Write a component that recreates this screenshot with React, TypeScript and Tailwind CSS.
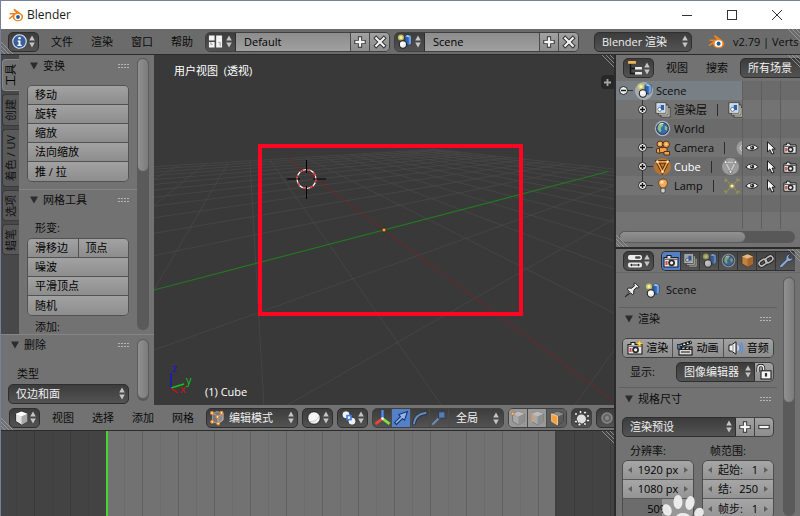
import React from "react";

type IconProps = { className?: string };
type Kids = { children: React.ReactNode; className?: string };

const DARK = "bg-linear-to-b from-[#3c3c3c] to-[#535353] text-[#f0f0f0]";
const LIGHT = "bg-linear-to-b from-[#a2a2a2] to-[#8d8d8d] text-black";

/* ---------- shared widgets ---------- */

function Svg({ children, className = "size-4" }: { children: React.ReactNode; className?: string }) {
  return (
    <svg viewBox="0 0 16 16" className={"shrink-0 " + className} aria-hidden="true">
      {children}
    </svg>
  );
}

function Arrows({ className = "" }: IconProps) {
  return (
    <svg viewBox="0 0 6 13" className={"h-[13px] w-[6px] shrink-0 " + className} aria-hidden="true">
      <path d="M3 0.5L5.8 5.5H0.2zM3 12.5L5.8 7.5H0.2z" fill="#c4c4c4" />
    </svg>
  );
}

function MenuButton({ label, children, className = "rounded-[5px] border" }: Kids & { label: string }) {
  return (
    <button
      aria-label={label}
      className={"flex h-5 w-[31px] shrink-0 items-center justify-between border-[#2e2e2e] px-[3px] " + DARK + " " + className}
    >
      {children}
      <Arrows />
    </button>
  );
}

function Picker({ label, value, className = "", selectClass = "rounded-[5px] border" }: { label: string; value: string; className?: string; selectClass?: string }) {
  return (
    <span className={"relative flex h-5 " + className}>
      <select
        aria-label={label}
        className={"h-full w-full appearance-none border-[#2e2e2e] pr-3 pl-[7px] outline-none " + DARK + " " + selectClass}
      >
        <option>{value}</option>
      </select>
      <Arrows className="pointer-events-none absolute top-[3px] right-1" />
    </span>
  );
}

function Strip({ children, className = "" }: Kids) {
  return (
    <div className={"flex h-5 shrink-0 divide-x divide-[#4a4a4a] overflow-hidden rounded-[5px] border border-[#404040] " + className}>
      {children}
    </div>
  );
}

function Cell({ label, children, className = "" }: Kids & { label: string }) {
  return (
    <button aria-label={label} className={"flex h-full w-[19px] shrink-0 items-center justify-center " + className}>
      {children}
    </button>
  );
}

function Menus({ items }: { items: string[] }) {
  return (
    <nav className="ml-3 flex shrink-0 gap-[18px]">
      {items.map((t) => (
        <button key={t} className="whitespace-nowrap">
          {t}
        </button>
      ))}
    </nav>
  );
}

function Grip() {
  return (
    <svg viewBox="0 0 11 5" className="h-[5px] w-[11px]" aria-hidden="true">
      {[0, 3, 6, 9].map((x) => (
        <g key={x} fill="#b5b5b5">
          <rect x={x} y="0" width="2" height="1" />
          <rect x={x} y="3" width="2" height="1" />
        </g>
      ))}
    </svg>
  );
}

function PanelHead({ title, className = "" }: { title: string; className?: string }) {
  return (
    <div className={"flex h-5 items-center " + className}>
      <svg viewBox="0 0 8 8" className="mr-[5px] size-2" aria-hidden="true">
        <path d="M0 0.5H8L4 7.5z" fill="#2c2c2c" />
      </svg>
      <h2 className="flex-1">{title}</h2>
      <Grip />
    </div>
  );
}

function Corner({ className = "", flip = false }: { className?: string; flip?: boolean }) {
  return (
    <svg viewBox="0 0 12 12" className={"pointer-events-none absolute size-3 " + className} aria-hidden="true">
      <path
        d={flip ? "M0 0L12 12M4 0L12 8M8 0L12 4" : "M0 0L12 12M0 4L8 12M0 8L4 12"}
        stroke="#a0a0a0"
        strokeWidth="0.8"
      />
    </svg>
  );
}

/* ---------- icons ---------- */

function BlenderLogo({ className }: IconProps) {
  return (
    <Svg className={className}>
      <path d="M6.6 1.8L14 7.2Q15.6 9 15 11C14.2 13.4 12 14.4 9.8 14.3C7 14.2 4.8 12.4 4.6 10L1.8 12.2Q0.6 12.4 0.7 11.2L5.2 7.6H1.8Q0.9 6.8 1.8 6.1H8.2L5.6 3.4Q5.4 2 6.6 1.8z" fill="#f0831e" />
      <ellipse cx="9.9" cy="10" rx="3.6" ry="3.1" fill="#fff" />
      <circle cx="10" cy="10" r="1.9" fill="#1c5a9e" />
    </Svg>
  );
}

function InfoIcon() {
  return (
    <Svg className="size-[15px]">
      <circle cx="8" cy="8" r="7.2" fill="#3a5f9f" stroke="#dfe6f2" strokeWidth="1.2" />
      <circle cx="8" cy="4.4" r="1.3" fill="#fff" />
      <path d="M6 7H9V11.5H10.3V12.8H5.8V11.5H7V8.2H6z" fill="#fff" />
    </Svg>
  );
}

function LayoutIcon() {
  return (
    <Svg className="size-[15px]">
      <path d="M1 1.5H7V7H1zM1 8.5H7V14.5H1zM8.7 1.5H15V14.5H8.7z" fill="#f4f4f4" />
      <path d="M3 8.5V11H5M11 9H13V13" stroke="#9a9a9a" fill="none" />
    </Svg>
  );
}

function SceneIcon({ className = "size-[15px]" }: IconProps) {
  return (
    <Svg className={className}>
      <circle cx="4.2" cy="3.8" r="3.2" fill="#d8d266" opacity="0.85" />
      <circle cx="4.2" cy="3.8" r="1.6" fill="#f6f3a0" />
      <path d="M8.5 2.5L11 1L15 2V10L12.5 12L8.5 11z" fill="#2f63b4" stroke="#17315c" strokeWidth="0.7" />
      <path d="M8.5 2.5L11 1L15 2L12.5 3.5z" fill="#a8cbf5" />
      <path d="M12.5 3.5L15 2V10L12.5 12z" fill="#6d9fdf" />
      <circle cx="6.3" cy="11.2" r="3.9" fill="#ececec" stroke="#1b1b1b" strokeWidth="1.1" />
      <circle cx="5.6" cy="10.3" r="1.8" fill="#fff" />
    </Svg>
  );
}

function TreeIcon() {
  return (
    <Svg>
      <path d="M3.5 4V13.5H8M3.5 8.5H8" stroke="#161616" strokeWidth="1.5" fill="none" />
      <rect x="1" y="1" width="8" height="2.8" rx="0.6" fill="#f0b354" />
      <rect x="8" y="7" width="7" height="2.6" rx="0.6" fill="#ececec" />
      <rect x="8" y="12" width="7" height="2.6" rx="0.6" fill="#ececec" />
    </Svg>
  );
}

function PropsIcon() {
  return (
    <Svg>
      <rect x="1" y="2" width="14" height="5" rx="2" fill="#ececec" />
      <rect x="8" y="3.2" width="5.5" height="2.6" rx="1.3" fill="#4c4c4c" />
      <rect x="1" y="9.5" width="14" height="5" rx="2" fill="#ececec" />
      <path d="M3 12L5 10.4V13.6zM13 12L11 10.4V13.6z" fill="#222" />
      <path d="M5 12H11" stroke="#222" />
    </Svg>
  );
}

function LayersIcon({ className = "size-4" }: IconProps) {
  return (
    <Svg className={className}>
      <rect x="6" y="5.5" width="9" height="9.5" fill="#d8d8cf" stroke="#333" strokeWidth="0.8" />
      <rect x="3.6" y="3" width="9.4" height="10" fill="#ecebd8" stroke="#333" strokeWidth="0.8" />
      <rect x="1" y="0.8" width="10" height="10.4" fill="#f2f2f2" stroke="#333" strokeWidth="0.8" />
      <rect x="2.3" y="2.2" width="7.4" height="7.6" fill="#b9d3f2" />
      <rect x="5.8" y="3" width="3.2" height="5" fill="#2d5faf" />
      <circle cx="4.6" cy="7.4" r="1.9" fill="#fff" stroke="#333" strokeWidth="0.6" />
    </Svg>
  );
}

function WorldIcon({ className = "size-4" }: IconProps) {
  return (
    <Svg className={className}>
      <circle cx="8" cy="8" r="7.2" fill="#c3cbdc" opacity="0.75" />
      <circle cx="8" cy="8" r="5.6" fill="#3a6ab0" stroke="#22344f" strokeWidth="0.9" />
      <path d="M4 5Q6 2.8 8 3.4L8.6 5.4L6.4 7.6L7 10L5.6 11.6L3.4 8.5zM10 5.5L12.6 6.5L12 10L10.2 9z" fill="#8fbf7d" />
      <path d="M5 4.2Q7 2.8 9 3.5" stroke="#e4eefc" fill="none" />
    </Svg>
  );
}

function MovieCamIcon() {
  return (
    <Svg>
      <g fill="#f2a24c" stroke="#4a2a0c" strokeWidth="0.9">
        <path d="M1.5 9L5 8V13.5L1.5 12.5z" />
        <rect x="4.5" y="7.6" width="7.5" height="5" rx="1" />
        <circle cx="5" cy="4" r="3" />
        <circle cx="11.2" cy="4.3" r="3.3" />
        <path d="M9 11.5H14.5V15H9z" />
      </g>
      <circle cx="5" cy="4" r="1" fill="#fbd9a8" />
      <circle cx="11.2" cy="4.3" r="1.1" fill="#fbd9a8" />
    </Svg>
  );
}

function MeshIcon({ color, bg }: { color: string; bg: string }) {
  return (
    <Svg className="size-[17px]">
      <circle cx="8" cy="8" r="8" fill={bg} />
      <path d="M3.2 3.6H12.8L8 13z" fill="none" stroke="#3b220a" strokeWidth="3" />
      <path d="M3.2 3.6H12.8L8 13z" fill="none" stroke={color} strokeWidth="1.6" />
      <g fill="#fff" stroke={color} strokeWidth="0.6">
        <circle cx="3.2" cy="3.6" r="1.2" />
        <circle cx="12.8" cy="3.6" r="1.2" />
        <circle cx="8" cy="13" r="1.2" />
      </g>
    </Svg>
  );
}

function MeshDataIcon() {
  return (
    <Svg className="size-[17px]">
      <circle cx="8" cy="8" r="8" fill="#9c9c9c" />
      <path d="M3.4 4H12.6L8 13z" fill="none" stroke="#cfcfcf" />
      <g fill="#f3f3f3" stroke="#555" strokeWidth="0.6">
        <circle cx="3.4" cy="4" r="1.4" />
        <circle cx="12.6" cy="4" r="1.4" />
        <circle cx="8" cy="13" r="1.4" />
      </g>
    </Svg>
  );
}

function BulbIcon() {
  return (
    <Svg>
      <path d="M8 1C4.8 1 3.4 3.2 3.6 5.4C3.8 7.4 5.8 8.2 5.8 10H10.2C10.2 8.2 12.2 7.4 12.4 5.4C12.6 3.2 11.2 1 8 1z" fill="#f5a955" stroke="#5e350f" strokeWidth="0.8" />
      <circle cx="7" cy="4.2" r="1.6" fill="#fde2bb" />
      <path d="M5.9 10.2H10.1V13.4L9 15H7L5.9 13.4z" fill="#cfcfcf" stroke="#333" strokeWidth="0.7" />
    </Svg>
  );
}

function LampDataIcon() {
  return (
    <Svg>
      <path d="M1 4V1H4M12 1H15V4M1 12V15H4M12 15H15V12M2 2L5 5M14 2L11 5M2 14L5 11M14 14L11 11" stroke="#a39a48" fill="none" strokeWidth="1.1" strokeDasharray="2 1" />
      <circle cx="8" cy="8" r="3.2" fill="#8f8a55" />
      <circle cx="8" cy="8" r="1.6" fill="#f3f0c4" />
    </Svg>
  );
}

function EyeIcon() {
  return (
    <Svg className="size-[14px]">
      <path d="M0.8 8Q7.5 1 15.2 7.5Q8 14 0.8 8z" fill="#f4f4f4" stroke="#222" strokeWidth="1.1" />
      <circle cx="8.2" cy="7.7" r="2.4" fill="#222" />
      <circle cx="7.5" cy="7" r="0.8" fill="#ddd" />
    </Svg>
  );
}

function PointerIcon() {
  return (
    <Svg className="size-[14px]">
      <path d="M4 1V12.5L6.8 10L9 15L11.4 14L9.2 9.2H12.8z" fill="#f8f8f8" stroke="#161616" strokeWidth="1.1" />
    </Svg>
  );
}

function CameraIcon({ spark = false, className = "size-4" }: { spark?: boolean; className?: string }) {
  return (
    <Svg className={className}>
      <path d="M1 4.5H4V2.5H8V4.5H15V14H1z" fill="#e6e6e6" stroke="#1e1e1e" strokeWidth="1.1" />
      <path d="M1.6 6.2H14.4" stroke="#3a3a3a" />
      <circle cx="8.6" cy="9.8" r="3.4" fill="#2a2a2a" />
      <circle cx="8.6" cy="9.8" r="1.6" fill="#f6f6f6" />
      <rect x="2.5" y="8" width="2" height="4" fill="#d14b4b" />
      {spark && <path d="M12.5 0L13.6 2.4L16 3.5L13.6 4.6L12.5 7L11.4 4.6L9 3.5L11.4 2.4z" fill="#ffe14a" stroke="#cf8a1e" strokeWidth="0.5" />}
    </Svg>
  );
}

function BoxIcon() {
  return (
    <Svg className="size-[15px] opacity-85">
      <path d="M8 1.2L14 3.6V11.6L8 14.8L2 11.6V3.6z" fill="#d98a3c" stroke="#50310f" strokeWidth="0.9" />
      <path d="M8 1.2L14 3.6L8 6L2 3.6z" fill="#f7cf9a" />
      <path d="M8 6L14 3.6V11.6L8 14.8z" fill="#b86c25" />
    </Svg>
  );
}

function ChainIcon() {
  return (
    <Svg>
      <g fill="none" strokeLinecap="round">
        <g stroke="#222" strokeWidth="3.4">
          <rect x="0.8" y="7" width="8" height="5" rx="2.5" transform="rotate(-35 5 9.5)" />
          <rect x="7.2" y="4" width="8" height="5" rx="2.5" transform="rotate(-35 11 6.5)" />
        </g>
        <g stroke="#bdbdbd" strokeWidth="1.6">
          <rect x="0.8" y="7" width="8" height="5" rx="2.5" transform="rotate(-35 5 9.5)" />
          <rect x="7.2" y="4" width="8" height="5" rx="2.5" transform="rotate(-35 11 6.5)" />
        </g>
      </g>
    </Svg>
  );
}

function WrenchIcon() {
  return (
    <Svg>
      <path d="M2 12.2L8 6.6Q7.2 3.4 9.6 1.8Q11 0.8 12.6 1.2L10.6 3.4L11.2 5.2L13 5.6L15 3.6Q15.2 6.2 13.4 7.6Q11.8 8.8 10 8.4L4.2 14.4Q2.6 15.2 1.7 14.2Q1 13.2 2 12.2z" fill="#8fa9cc" stroke="#26364d" strokeWidth="0.9" />
    </Svg>
  );
}

function PinIcon() {
  return (
    <Svg>
      <path d="M1.2 14.8L5.6 9.8L3 7.2L4.8 6L7.6 6.2L10.4 3.8L9.8 1.8L11 0.8L15.2 5L14.2 6.2L12.2 5.6L9.8 8.4V11.2L8.6 12.8L6.6 10.8z" fill="#ececec" stroke="#1d1d1d" strokeWidth="1" />
    </Svg>
  );
}

function ClapperIcon() {
  return (
    <Svg>
      <rect x="2" y="7" width="13" height="8" fill="#d8d8d8" stroke="#161616" strokeWidth="1.1" />
      <path d="M2 4.6L13.8 1L14.6 3.4L2.8 7z" fill="#f4f4f4" stroke="#161616" />
      <path d="M4.6 4L6.2 5.8M8.2 2.8L9.8 4.8M11.6 1.8L13 3.8M5 7L4 9.2M9 7L8 9.2M13 7L12 9.2" stroke="#161616" strokeWidth="1.7" />
      <path d="M2 9.4H15M4 12H13" stroke="#161616" />
      <rect x="0.6" y="4.4" width="2.6" height="4.6" fill="#4977bb" stroke="#161616" strokeWidth="0.6" />
    </Svg>
  );
}

function SpeakerIcon() {
  return (
    <Svg>
      <path d="M1 5H3.4L8 1.8V14.2L3.4 11H1z" fill="#f2f2f2" stroke="#1c1c1c" strokeWidth="1" />
      <path d="M5 4.5V11.5" stroke="#888" />
      <path d="M9.6 5.4Q11 8 9.6 10.6" stroke="#cfe0fa" fill="none" strokeWidth="1.3" />
      <path d="M11.4 3.8Q13.6 8 11.4 12.2M13.2 2.4Q16.2 8 13.2 13.6" stroke="#5d8fd8" fill="none" strokeWidth="1.4" />
    </Svg>
  );
}

function LockIcon() {
  return (
    <Svg>
      <path d="M2 8V4.2Q2 1.4 4.8 1.4T7.6 4.2V6.6" stroke="#1e1e1e" strokeWidth="3.2" fill="none" />
      <path d="M2 8V4.2Q2 1.4 4.8 1.4T7.6 4.2V6.6" stroke="#ececec" strokeWidth="1.5" fill="none" />
      <rect x="5" y="6.8" width="10" height="8.2" fill="#f4f4f4" stroke="#1e1e1e" strokeWidth="1.1" />
      <path d="M10 9V12.6" stroke="#333" strokeWidth="2.2" />
    </Svg>
  );
}

function CubeIcon({ mode = "solid" }: { mode?: "solid" | "vert" | "edge" | "face" }) {
  const soft = mode === "vert" || mode === "edge";
  const right = soft ? "#8f8f8f" : mode === "face" ? "#5a5a5a" : "#a8a8a8";
  return (
    <Svg>
      <path d="M8.5 1.6L14.4 3.8V11.4L8.5 15L2.6 11.4V3.8z" fill={soft ? "#a9a9a9" : "#e2e2e2"} stroke={soft ? "#777" : "#222"} strokeWidth="0.9" />
      <path d="M8.5 1.6L14.4 3.8L8.5 6.4L2.6 3.8z" fill={soft ? "#bcbcbc" : mode === "face" ? "#8a8a8a" : "#fff"} />
      <path d="M8.5 6.4L14.4 3.8V11.4L8.5 15z" fill={right} />
      {mode === "face" && <path d="M2.6 3.8L8.5 6.4V15L2.6 11.4z" fill="#f59f3d" stroke="#fbd3a0" strokeWidth="0.8" />}
      {mode === "vert" && <circle cx="2.8" cy="3.6" r="1.7" fill="#f0b27a" stroke="#9a6a3c" strokeWidth="0.6" />}
      {mode === "edge" && <path d="M3 3.4V12.2" stroke="#dc9a5e" strokeWidth="1.8" />}
    </Svg>
  );
}

function EditModeIcon() {
  return (
    <Svg>
      <path d="M3.5 3.5L8 1.5L14 3.2V10L9.5 13.5L3.5 12z" fill="#777" stroke="#b5b5b5" strokeWidth="0.7" />
      <path d="M3.5 3.5L9 6L14 3.2V10L9 13.5V6" fill="#8d8d8d" stroke="#c8c8c8" strokeWidth="0.6" />
      {[[3, 3], [8.5, 6.8], [12.5, 2.8], [3.2, 11.8], [9.2, 13.6]].map(([x, y]) => (
        <circle key={x + "-" + y} cx={x} cy={y} r="1.4" fill="#fff3e2" stroke="#e8842a" strokeWidth="1.1" />
      ))}
    </Svg>
  );
}

function SphereIcon() {
  return (
    <Svg>
      <circle cx="8" cy="8" r="6.3" fill="#f4f4f4" stroke="#1f1f1f" />
      <path d="M3.5 11.5Q10 13 13.2 6" stroke="#c9c9c9" fill="none" />
    </Svg>
  );
}

function PivotIcon() {
  return (
    <Svg>
      <circle cx="5" cy="4.8" r="4" fill="#f2f2f2" stroke="#222" strokeWidth="0.8" />
      <circle cx="11" cy="11.2" r="4" fill="#f2f2f2" stroke="#222" strokeWidth="0.8" />
      <rect x="6" y="5.6" width="4" height="4" fill="#f2f2f2" stroke="#3f7fe0" strokeWidth="1.6" />
    </Svg>
  );
}

function AxesIcon() {
  return (
    <Svg className="size-[17px]">
      <path d="M8 1V9" stroke="#4d8df0" strokeWidth="2.2" />
      <path d="M8 9L1.4 14" stroke="#f0433c" strokeWidth="2.6" />
      <path d="M8 9L14.6 14" stroke="#7de04a" strokeWidth="2.6" />
      <circle cx="8" cy="9" r="1.2" fill="#fff" />
    </Svg>
  );
}

function MoveIcon() {
  return (
    <Svg>
      <path d="M1.5 12.6L7.4 6.8L5.8 4.6L14.4 1.6L11.6 10.2L9.4 8.6L3.5 14.5z" fill="#8fb4ee" stroke="#16305f" strokeWidth="1.1" />
    </Svg>
  );
}

function RotateIcon() {
  return (
    <Svg>
      <path d="M2 13.5Q3 4.5 13.5 3" stroke="#27374f" strokeWidth="4" fill="none" strokeLinecap="round" />
      <path d="M2 13.5Q3 4.5 13.5 3" stroke="#6c8bb5" strokeWidth="2" fill="none" strokeLinecap="round" />
    </Svg>
  );
}

function ScaleIcon() {
  return (
    <Svg>
      <path d="M2 14L9 7" stroke="#6c8bb5" strokeWidth="2.2" strokeLinecap="round" />
      <rect x="7.6" y="1.8" width="6.4" height="6.4" fill="#5b7bab" stroke="#2a3c59" />
    </Svg>
  );
}

function OcclusionIcon() {
  return (
    <Svg>
      <circle cx="7.4" cy="9" r="4.6" fill="#dedede" />
      <g fill="#efefef" stroke="#1d1d1d" strokeWidth="0.7">
        {[[2, 4], [6.5, 2], [11, 2.6], [14, 6], [14, 10.5], [11, 14], [5.5, 14.4], [2, 11.6]].map(([x, y]) => (
          <circle key={x + "-" + y} cx={x} cy={y} r="1.5" />
        ))}
      </g>
    </Svg>
  );
}

function PlusIcon() {
  return (
    <Svg className="size-[14px]">
      <path d="M8 1.5V14.5M1.500 8H14.500" stroke="#333" strokeWidth="4.800" />
      <path d="M8 2.600V13.400M2.600 8H13.400" stroke="#f4f4f4" strokeWidth="2.600" />
    </Svg>
  );
}

function MinusIcon() {
  return (
    <Svg className="size-[14px]">
      <path d="M1.500 8H14.500" stroke="#333" strokeWidth="4.800" />
      <path d="M2.700 8H13.300" stroke="#f4f4f4" strokeWidth="2.600" />
    </Svg>
  );
}

function CrossIcon() {
  return (
    <Svg className="size-[14px]">
      <path d="M2 2L14 14M14 2L2 14" stroke="#333" strokeWidth="4.600" />
      <path d="M2.800 2.800L13.200 13.200M13.200 2.800L2.800 13.200" stroke="#f4f4f4" strokeWidth="2.400" />
    </Svg>
  );
}

/* ---------- top bars ---------- */

function TitleBar() {
  return (
    <header className="flex h-7 shrink-0 items-center bg-white pr-px pl-[7px] text-[#1a1a1a]">
      <BlenderLogo className="size-4" />
      <h1 className="ml-[3px] flex-1 text-[12px]">Blender</h1>
      <button aria-label="Minimize" className="flex w-[45px] justify-center">
        <svg viewBox="0 0 10 10" className="size-[10px]"><path d="M0 5.5H10" stroke="#333" /></svg>
      </button>
      <button aria-label="Maximize" className="flex w-[45px] justify-center">
        <svg viewBox="0 0 10 10" className="size-[10px]"><rect x="0.5" y="0.5" width="9" height="9" fill="none" stroke="#333" /></svg>
      </button>
      <button aria-label="Close" className="flex w-[45px] justify-center">
        <svg viewBox="0 0 10 10" className="size-[10px]"><path d="M0 0L10 10M10 0L0 10" stroke="#333" /></svg>
      </button>
    </header>
  );
}

function DataBlock({ label, value, icon }: { label: string; value: string; icon: React.ReactNode }) {
  return (
    <Strip>
      <MenuButton label={label + " list"} className="-my-px -ml-px">
        {icon}
      </MenuButton>
      <input aria-label={label} defaultValue={value} className="w-[115px] bg-linear-to-b from-[#8c8c8c] to-[#a0a0a0] px-2 text-black outline-none" />
      <Cell label={"Add " + label} className={LIGHT}><PlusIcon /></Cell>
      <Cell label={"Delete " + label} className={LIGHT}><CrossIcon /></Cell>
    </Strip>
  );
}

function InfoBar() {
  return (
    <div className="relative flex h-[26px] shrink-0 items-center overflow-hidden border-b border-[#2b2b2b] bg-[#6b6b6b] pl-[7px]">
      <MenuButton label="Editor type"><InfoIcon /></MenuButton>
      <Menus items={["文件", "渲染", "窗口", "帮助"]} />
      <div className="ml-3 flex shrink-0 items-center gap-1">
        <DataBlock label="Screen" value="Default" icon={<LayoutIcon />} />
        <DataBlock label="Scene" value="Scene" icon={<SceneIcon />} />
      </div>
      <Picker label="Render engine" value="Blender 渲染" className="ml-[15px] w-[98px] shrink-0" />
      <BlenderLogo className="ml-4 size-[17px]" />
      <span className="ml-2 whitespace-nowrap">v2.79 | Verts</span>
      <Corner className="bottom-0 left-0" />
      <Corner className="top-0 right-0" flip />
    </div>
  );
}

/* ---------- tool shelf ---------- */

function ToolButtons({ rows }: { rows: string[][] }) {
  return (
    <div className="mr-2 ml-2 divide-y divide-[#525252] overflow-hidden rounded-[5px] border border-[#525252]">
      {rows.map((row) => (
        <div key={row[0]} className="flex h-[19px] divide-x divide-[#525252]">
          {row.map((t) => (
            <button key={t} className={"flex-1 pl-[7px] text-left " + LIGHT}>
              {t}
            </button>
          ))}
        </div>
      ))}
    </div>
  );
}

function VScroll({ thumb, className = "" }: { thumb: string; className?: string }) {
  return (
    <div className={"w-3 shrink-0 rounded-full bg-[#5a5a5a] " + className}>
      <div className={"rounded-full border border-[#5c5c5c] bg-linear-to-r from-[#919191] to-[#7c7c7c] " + thumb} />
    </div>
  );
}

const shelfTabs = [
  { name: "工具", size: "h-8" },
  { name: "创建", size: "h-8" },
  { name: "着色 / UV", size: "h-[58px]" },
  { name: "选项", size: "h-[31px]" },
  { name: "蜡笔", size: "h-[31px]" },
];

function ToolShelf() {
  return (
    <aside className="flex w-[153px] shrink-0 flex-col bg-[#727272]">
      <div className="flex min-h-0 flex-1">
        <div role="tablist" className="flex w-[18px] shrink-0 flex-col gap-[3px] bg-[#484848] pt-1 pl-px">
          {shelfTabs.map((t, i) => (
            <button
              key={t.name}
              role="tab"
              aria-selected={i === 0}
              className={
                "flex w-full shrink-0 items-center justify-center rounded-l-[4px] border border-r-0 " +
                t.size +
                (i === 0 ? " border-[#8a8a8a] bg-[#727272] text-black" : " border-[#3a3a3a] bg-[#595959] text-[#111]")
              }
            >
              <span className="rotate-180 whitespace-nowrap [text-orientation:sideways] [writing-mode:vertical-rl]">{t.name}</span>
            </button>
          ))}
        </div>
        <div className="min-w-0 flex-1 overflow-hidden">
          <div className="pt-px pb-[7px]">
            <PanelHead title="变换" className="mb-[9px] pr-2 pl-[11px]" />
            <ToolButtons rows={[["移动"], ["旋转"], ["缩放"], ["法向缩放"], ["推 / 拉"]]} />
          </div>
          <div className="border-t border-[#858585]">
            <PanelHead title="网格工具" className="mb-2 pr-2 pl-[11px]" />
            <p className="h-5 pl-4 leading-[20px]">形变:</p>
            <ToolButtons rows={[["滑移边", "顶点"], ["噪波"], ["平滑顶点"], ["随机"]]} />
            <p className="mt-1 pl-4">添加:</p>
          </div>
        </div>
        <VScroll thumb="h-[114px]" className="mt-[3px] mr-[5px] mb-1" />
      </div>
      <div className="flex h-[71px] shrink-0 border-t border-[#858585]">
        <div className="flex-1 pr-2 pl-[7px]">
          <PanelHead title="删除" className="mb-[9px] pl-[3px]" />
          <label htmlFor="del-type" className="block h-5 pl-[9px] leading-[20px]">类型</label>
          <span className="relative flex h-5">
            <select id="del-type" className={"h-full w-full appearance-none rounded-[5px] border border-[#2e2e2e] pl-[7px] outline-none " + DARK}>
              <option>仅边和面</option>
            </select>
            <Arrows className="pointer-events-none absolute top-[3px] right-1" />
          </span>
        </div>
        <VScroll thumb="h-[60px]" className="mt-1 mr-[5px] mb-1" />
      </div>
    </aside>
  );
}

/* ---------- 3D viewport ---------- */

/* Perspective floor: u runs along the green axis, v along the red one. */
const REACH = 12;
const depth = (u: number, v: number) => 1 + 0.124 * u - 0.2009 * v;
function project(u: number, v: number): [number, number] {
  const w = depth(u, v);
  return [230 + (48.2 * u + 27.3 * v) / w, 175 + (-12.57 * u + 20.35 * v) / w];
}
function segment(u0: number, v0: number, u1: number, v1: number) {
  const [x1, y1] = project(u0, v0);
  const [x2, y2] = project(u1, v1);
  return { x1, y1, x2, y2 };
}
const steps = Array.from({ length: REACH * 2 + 1 }, (_, i) => i - REACH);
const alongV = (u: number) => segment(u, -REACH, u, Math.min(REACH, (0.92 + 0.124 * u) / 0.2009));
const alongU = (v: number, end = REACH) => segment(Math.max(-REACH, (0.2009 * v - 0.92) / 0.124), v, end, v);

function Viewport() {
  return (
    <section className="relative min-w-0 flex-1 overflow-hidden bg-[#393939] text-white">
      <svg viewBox="0 0 460 350" preserveAspectRatio="xMidYMid slice" className="absolute inset-0 h-full w-full" aria-hidden="true">
        <g stroke="#484848" strokeWidth="0.8">
          {steps.filter((n) => n !== 0 && n > -8).map((n) => <line key={"u" + n} {...alongV(n)} />)}
          {steps.filter((n) => n !== 0).map((n) => <line key={"v" + n} {...alongU(n)} />)}
        </g>
        <line {...alongU(0, 11)} stroke="#217a21" strokeWidth="1.1" />
        <line {...alongV(0)} stroke="#7c2323" strokeWidth="0.9" />
        <circle cx="152.5" cy="124" r="9.5" fill="none" stroke="#fff" strokeWidth="1.2" />
        <circle cx="152.5" cy="124" r="9.5" fill="none" stroke="#e02020" strokeWidth="1.2" strokeDasharray="3.73 3.73" />
        <path d="M133 124H146M159 124H172M152.5 105V118M152.5 131V144" stroke="#000" />
        <circle cx="230" cy="175" r="2" fill="#f7a23b" stroke="#2a1a08" strokeWidth="0.7" />
        <rect x="106" y="91" width="261" height="168" fill="none" stroke="#ff0522" strokeWidth="4" />
        <g fontFamily="Open Sans" fontSize="11" strokeWidth="1.4">
          <path d="M17 333V318" stroke="#1414d8" />
          <path d="M17 333L30 329" stroke="#14c814" />
          <path d="M17 333L24 338" stroke="#d01414" />
          <text x="18" y="317" fill="#1414d8">z</text>
          <text x="32" y="329" fill="#14c814">y</text>
          <text x="26" y="338" fill="#d01414">x</text>
        </g>
      </svg>
      <div className="relative flex h-full flex-col justify-between">
        <span className="pt-2 pl-5 leading-4">用户视图&nbsp; (透视)</span>
        <span className="pb-[5px] pl-[51px] leading-4">(1) Cube</span>
      </div>
      <button aria-label="Show properties" className="absolute top-5 right-0 flex h-[14px] w-[13px] items-center justify-center rounded-l-[4px] bg-[#282828]">
        <svg viewBox="0 0 7 7" className="size-[7px]"><path d="M3.5 0V7M0 3.5H7" stroke="#a5a5a5" strokeWidth="1.8" /></svg>
      </button>
      <Corner className="top-0 right-0" flip />
    </section>
  );
}

function ViewBar() {
  return (
    <div className="relative flex h-[26px] shrink-0 items-center overflow-hidden border-b border-[#2b2b2b] bg-[#727272] pl-2">
      <MenuButton label="Editor type"><CubeIcon /></MenuButton>
      <Menus items={["视图", "选择", "添加", "网格"]} />
      <div className="ml-3 flex shrink-0 gap-1">
        <span className="relative flex h-5 w-[92px]">
          <select aria-label="Mode" className={"h-full w-full appearance-none rounded-[5px] border border-[#2e2e2e] pl-[22px] outline-none " + DARK}>
            <option>编辑模式</option>
          </select>
          <span className="pointer-events-none absolute top-[2px] left-[3px]"><EditModeIcon /></span>
          <Arrows className="pointer-events-none absolute top-[3px] right-1" />
        </span>
        <MenuButton label="Viewport shading"><SphereIcon /></MenuButton>
        <MenuButton label="Pivot point"><PivotIcon /></MenuButton>
        <Strip className={DARK}>
          <Cell label="Manipulator"><AxesIcon /></Cell>
          <Cell label="Translate" className="bg-[#5480c9]"><MoveIcon /></Cell>
          <Cell label="Rotate"><RotateIcon /></Cell>
          <Cell label="Scale"><ScaleIcon /></Cell>
          <Picker label="Orientation" value="全局" className="w-[54px]" selectClass="-mt-px" />
        </Strip>
        <Strip>
          <Cell label="Vertex select" className="bg-[#999]"><CubeIcon mode="vert" /></Cell>
          <Cell label="Edge select" className="bg-[#999]"><CubeIcon mode="edge" /></Cell>
          <Cell label="Face select" className="bg-[#5c5c5c]"><CubeIcon mode="face" /></Cell>
        </Strip>
        <Strip className={DARK}>
          <Cell label="Limit selection to visible"><OcclusionIcon /></Cell>
        </Strip>
        <MenuButton label="Proportional editing">
          <Svg>
            <circle cx="7" cy="8" r="5" fill="#666" stroke="#8a8a8a" strokeWidth="1.4" />
            <circle cx="7" cy="8" r="2" fill="#8a8a8a" />
          </Svg>
        </MenuButton>
      </div>
      <Corner className="bottom-0 left-0" />
    </div>
  );
}

function Timeline() {
  const marks = Array.from({ length: 34 }, (_, i) => 15 + i * 18);
  return (
    <section className="relative h-[85px] shrink-0 overflow-hidden">
      <svg viewBox="0 0 613 85" preserveAspectRatio="none" className="h-full w-full" aria-label="Timeline">
        <rect width="613" height="85" fill="#434343" />
        <rect x="106" width="448" height="85" fill="#727272" />
        {marks.map((x, i) => (
          <rect key={x} x={x} width="1" height="85" fill="#000" opacity={i % 2 ? 0.15 : 0.05} />
        ))}
        <rect x="105" width="2" height="85" fill="#45d62b" />
      </svg>
      <Corner className="top-0 right-0" flip />
    </section>
  );
}

/* ---------- outliner ---------- */

type Row = { name: string; icon: React.ReactNode; extra?: React.ReactNode; expand?: boolean; toggles?: boolean; tint: string; text?: string };

const rows: Row[] = [
  { name: "渲染层", icon: <LayersIcon />, extra: <LayersIcon />, expand: true, tint: "bg-[#737373]" },
  { name: "World", icon: <WorldIcon className="size-[17px]" />, tint: "bg-[#6b6b6b]" },
  {
    name: "Camera",
    icon: <MovieCamIcon />,
    extra: <Svg><circle cx="9" cy="8" r="7.5" fill="#9c9c9c" /><path d="M12 3Q5 5 5 8T12 13" stroke="#ddd" fill="none" /></Svg>,
    expand: true,
    toggles: true,
    tint: "bg-[#737373]",
  },
  { name: "Cube", icon: <MeshIcon color="#f5a24b" bg="#b47432" />, extra: <MeshDataIcon />, expand: true, toggles: true, tint: "bg-[#6b6b6b]", text: "text-white" },
  { name: "Lamp", icon: <BulbIcon />, extra: <LampDataIcon />, expand: true, toggles: true, tint: "bg-[#737373]" },
];

function Expander({ open = false }: { open?: boolean }) {
  return (
    <svg viewBox="0 0 9 9" className="size-[9px] shrink-0" aria-hidden="true">
      <circle cx="4.5" cy="4.5" r="4" fill="#eee" stroke="#111" strokeWidth="0.9" />
      <path d={open ? "M2 4.5H7" : "M2 4.5H7M4.5 2V7"} stroke="#111" strokeWidth="1.4" />
    </svg>
  );
}

function ToggleCells({ on }: { on?: boolean }) {
  const list: [string, React.ReactNode][] = [["Visible", <EyeIcon />], ["Selectable", <PointerIcon />], ["Renderable", <CameraIcon className="size-[14px]" />]];
  return (
    <div className="flex shrink-0">
      {list.map(([label, icon]) => (
        <div key={label} className="flex w-[19px] items-center justify-center border-l border-[#5e5e5e]">
          {on && <button aria-label={label}>{icon}</button>}
        </div>
      ))}
      <div className="w-px" />
    </div>
  );
}

function Outliner() {
  return (
    <section className="relative flex h-[194px] shrink-0 flex-col border-b-2 border-[#2b2b2b] bg-[#727272]">
      <div className="relative flex h-[26px] shrink-0 items-center overflow-hidden pl-[7px]">
        <MenuButton label="Editor type"><TreeIcon /></MenuButton>
        <Menus items={["视图", "搜索"]} />
        <select aria-label="Display mode" className={"ml-3 h-5 w-[90px] shrink-0 appearance-none rounded-[5px] border border-[#2e2e2e] pl-[7px] outline-none " + DARK}>
          <option>所有场景</option>
        </select>
        <Corner className="top-0 right-0" flip />
      </div>
      <div className="relative">
        <div className="flex h-[19px] bg-[#6b6b6b]">
          <div className="flex flex-1 items-center bg-[#788086] pl-[3px]">
            <Expander open />
            <span className="h-px w-[5px] bg-[#333]" />
            <span className="mx-[2px] flex size-[18px] items-center justify-center rounded-full bg-[#a9adb0]"><SceneIcon /></span>
            <span className="pl-px">Scene</span>
          </div>
          <ToggleCells />
        </div>
        {rows.map((r) => (
          <div key={r.name} className={"flex h-[19px] " + r.tint}>
            <div className="flex min-w-0 flex-1 items-center overflow-hidden pl-[22px] whitespace-nowrap">
              {r.expand ? <Expander /> : <span className="w-[9px] shrink-0" />}
              <span className={"mr-px h-px w-[6px] shrink-0 " + (r.toggles ? "bg-[#333]" : "")} />
              <span className="flex w-[17px] shrink-0 justify-center">{r.icon}</span>
              <span className={"pl-[3px] " + (r.text ?? "")}>{r.name}</span>
              {r.extra && <span className="mx-[10px] h-3 w-px shrink-0 bg-[#2c2c2c]" />}
              {r.extra}
            </div>
            <ToggleCells on={r.toggles} />
          </div>
        ))}
        <span className="absolute top-[19px] left-[26px] h-[5px] w-px bg-[#333]" />
        <span className="absolute top-[33px] left-[26px] h-[29px] w-px bg-[#333]" />
        <span className="absolute top-[71px] left-[26px] h-[10px] w-px bg-[#333]" />
        <span className="absolute top-[90px] left-[26px] h-[10px] w-px bg-[#333]" />
      </div>
      <div className="flex flex-1 flex-col">
        {["bg-[#6b6b6b]", "bg-[#737373]"].map((c) => (
          <div key={c} className={"flex flex-1 " + c}>
            <div className="flex-1" />
            <ToggleCells />
          </div>
        ))}
      </div>
      <div className="mt-[2px] mr-[5px] mb-1 ml-[3px] h-3 shrink-0 rounded-full bg-[#585858]">
        <div className="h-full w-[72%] rounded-full border border-[#5c5c5c] bg-linear-to-b from-[#919191] to-[#7c7c7c]" />
      </div>
      <Corner className="bottom-0 left-0" />
    </section>
  );
}

/* ---------- properties ---------- */

function NumField({ label, prefix, value, dim = false }: { label: string; prefix?: string; value: string; dim?: boolean }) {
  return (
    <label
      className={
        "flex h-[19px] items-center px-[5px] " +
        (dim ? "bg-linear-to-r from-[#6c6c6c] from-55% to-[#979797] to-55%" : "bg-linear-to-b from-[#a6a6a6] to-[#949494]")
      }
    >
      <svg viewBox="0 0 4 6" className={"h-[6px] w-1 shrink-0 " + (dim ? "invisible" : "")}><path d="M4 0V6L0 3z" fill="#5f5f5f" /></svg>
      {prefix && <span className="shrink-0 pl-[6px]">{prefix}</span>}
      <input
        aria-label={label}
        defaultValue={value}
        className={"w-0 min-w-0 flex-1 bg-transparent text-black outline-none " + (prefix ? "pr-[6px] text-right" : "text-center")}
      />
      <svg viewBox="0 0 4 6" className={"h-[6px] w-1 shrink-0 " + (dim ? "invisible" : "")}><path d="M0 0V6L4 3z" fill="#5f5f5f" /></svg>
    </label>
  );
}

function FieldStack({ title, children }: { title: string; children: React.ReactNode }) {
  return (
    <div role="group" aria-label={title} className="min-w-0 flex-1">
      <p className="h-[19px] pl-2 leading-[20px]">{title}</p>
      <div className="divide-y divide-[#5a5a5a] overflow-hidden rounded-[6px] border border-[#4c4c4c]">{children}</div>
    </div>
  );
}

const contextTabs: [string, React.ReactNode][] = [
  ["Render", <CameraIcon />],
  ["Render layers", <LayersIcon className="size-[15px] opacity-65" />],
  ["Scene", <SceneIcon className="size-[15px] opacity-65" />],
  ["World", <WorldIcon className="size-[15px] opacity-75" />],
  ["Object", <BoxIcon />],
  ["Constraints", <ChainIcon />],
  ["Modifiers", <WrenchIcon />],
];

function Properties() {
  return (
    <section className="relative flex min-h-0 flex-1 flex-col overflow-hidden bg-[#727272]">
      <div className="flex h-[24px] shrink-0 items-center border-b border-[#666] pl-[7px]">
        <MenuButton label="Editor type"><PropsIcon /></MenuButton>
        <div role="tablist" className="ml-[7px] flex h-5 shrink-0 divide-x divide-[#333] overflow-hidden rounded-l-[5px] border border-r-0 border-[#2e2e2e]">
          {contextTabs.map(([label, icon], i) => (
            <button
              key={label}
              role="tab"
              aria-label={label}
              aria-selected={i === 0}
              className={"flex w-[19px] items-center justify-center " + (i === 0 ? "bg-[#5480c9]" : "bg-linear-to-b from-[#444] to-[#555]")}
            >
              {icon}
            </button>
          ))}
        </div>
        <Corner className="top-0 right-0" flip />
      </div>
      <div className="flex min-h-0 flex-1">
        <div className="min-w-0 flex-1 pl-[3px]">
          <div className="flex h-[34px] items-center gap-[5px] pl-[5px]">
            <PinIcon />
            <SceneIcon />
            <span className="pl-px">Scene</span>
          </div>
          <div className="border-t border-[#5f5f5f] pt-px pb-[5px]">
            <PanelHead title="渲染" className="mb-[9px] px-[6px]" />
            <div className="mx-[3px] flex h-5 divide-x divide-[#525252] overflow-hidden rounded-[5px] border border-[#404040]">
              {([["渲染", <CameraIcon spark />], ["动画", <ClapperIcon />], ["音频", <SpeakerIcon />]] as [string, React.ReactNode][]).map(([t, icon]) => (
                <button key={t} className={"flex flex-1 items-center justify-center gap-[3px] whitespace-nowrap " + LIGHT}>
                  {icon}
                  {t}
                </button>
              ))}
            </div>
            <div className="mx-[3px] mt-1 flex h-5 items-center">
              <span className="w-[54px] pl-2">显示:</span>
              <Picker label="显示" value="图像编辑器" className="min-w-0 flex-1" selectClass="rounded-l-[5px] border" />
              <Cell label="Lock interface" className={"rounded-r-[5px] border border-l-0 border-[#404040] " + LIGHT}><LockIcon /></Cell>
            </div>
          </div>
          <div className="border-t border-[#5f5f5f] pt-px">
            <PanelHead title="规格尺寸" className="mb-2 px-[6px]" />
            <div className="mx-[3px] mb-1 flex h-5">
              <Picker label="Presets" value="渲染预设" className="min-w-0 flex-1" selectClass="rounded-l-[5px] border" />
              <Cell label="Add preset" className={"border-y border-r border-[#404040] " + LIGHT}><PlusIcon /></Cell>
              <Cell label="Remove preset" className={"rounded-r-[5px] border-y border-r border-[#404040] " + LIGHT}><MinusIcon /></Cell>
            </div>
            <div className="mx-[3px] flex gap-2">
              <FieldStack title="分辨率:">
                <NumField label="Resolution X" value="1920 px" />
                <NumField label="Resolution Y" value="1080 px" />
                <NumField label="Resolution percentage" value="50%" dim />
              </FieldStack>
              <FieldStack title="帧范围:">
                <NumField label="Start frame" prefix="起始:" value="1" />
                <NumField label="End frame" prefix="结:" value="250" />
                <NumField label="Frame step" prefix="帧步:" value="1" />
              </FieldStack>
            </div>
          </div>
        </div>
        <VScroll thumb="h-[126px]" className="mt-1 mr-[5px] ml-[6px]" />
      </div>
      <svg viewBox="0 0 42 24" className="pointer-events-none absolute bottom-0 left-[46px] h-6 w-[42px]" aria-hidden="true">
        <g fill="#f3f3f3" opacity="0.92">
          <ellipse cx="5" cy="18" rx="4.5" ry="6" transform="rotate(-20 5 18)" />
          <ellipse cx="16" cy="10" rx="4.5" ry="7" />
          <ellipse cx="28" cy="11" rx="4.5" ry="7" transform="rotate(12 28 11)" />
          <ellipse cx="37" cy="21" rx="4.5" ry="5.5" transform="rotate(30 37 21)" />
          <ellipse cx="21" cy="25" rx="7" ry="4" />
        </g>
      </svg>
    </section>
  );
}

export default function App() {
  return (
    <div className="flex h-screen min-w-0 flex-col overflow-hidden border-t border-l border-[#77809a] bg-[#727272] font-['Open_Sans','Noto_Sans_CJK_SC',sans-serif] text-[11px] leading-[14px] text-[#0c0c0c]">
      <TitleBar />
      <InfoBar />
      <main className="flex min-h-0 flex-1">
        <div className="flex min-w-0 flex-1 flex-col">
          <div className="flex min-h-0 flex-1">
            <ToolShelf />
            <Viewport />
          </div>
          <ViewBar />
          <Timeline />
        </div>
        <div className="flex w-[186px] shrink-0 flex-col border-l-2 border-[#2b2b2b]">
          <Outliner />
          <Properties />
        </div>
      </main>
    </div>
  );
}
